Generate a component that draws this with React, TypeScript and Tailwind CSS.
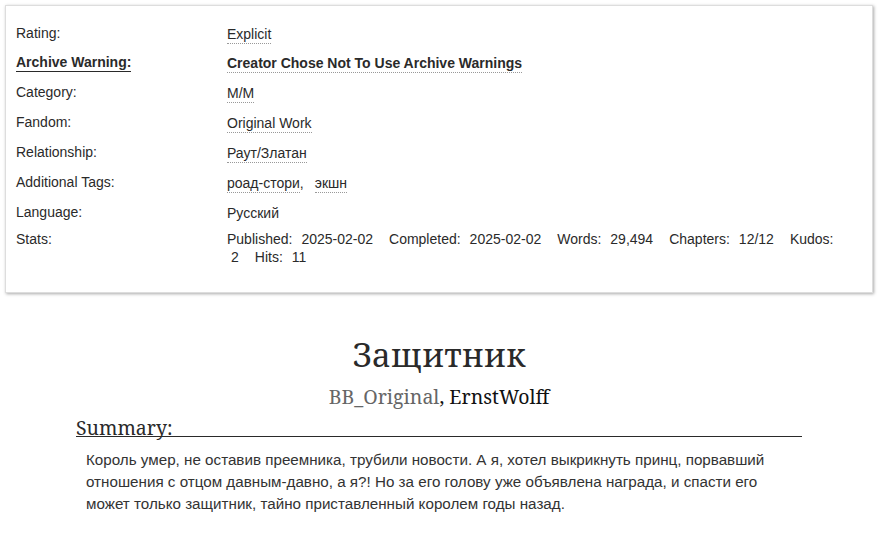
import React from 'react'

const sans = { fontFamily: '"Liberation Sans", Arial, sans-serif' }
const serif = { fontFamily: '"Noto Serif", "DejaVu Serif", Georgia, serif' }

function Tag({ children, bold = false }: { children: React.ReactNode; bold?: boolean }) {
  return (
    <span
      className={`inline-block border-b border-dotted border-[#999] leading-[18px] ${bold ? 'font-bold' : ''}`}
    >
      {children}
    </span>
  )
}

const stats1 = [
  ['Published:', '2025-02-02'],
  ['Completed:', '2025-02-02'],
  ['Words:', '29,494'],
  ['Chapters:', '12/12'],
]

export default function App() {
  return (
    <div className="min-h-[536px] bg-white text-[#2a2a2a]" style={sans}>
      <div className="mx-[5px] pt-[5px]">
        <div className="border border-[#ddd] bg-white shadow-[1px_1px_3px_#aaa] pl-[10px] pr-[10px] pt-[18px] pb-[26px] text-[14px] leading-[18px]">
          <div className="grid grid-cols-[211px_1fr] grid-rows-[29px_30px_30px_30px_30px_30px_27px_auto]">
            <div>Rating:</div>
            <div className="pt-px">
              <Tag>Explicit</Tag>
            </div>

            <div>
              <span className="inline-block border-b border-[#2a2a2a] font-bold">Archive Warning:</span>
            </div>
            <div className="pt-px">
              <Tag bold>Creator Chose Not To Use Archive Warnings</Tag>
            </div>

            <div>Category:</div>
            <div className="pt-px">
              <Tag>M/M</Tag>
            </div>

            <div>Fandom:</div>
            <div className="pt-px">
              <Tag>Original Work</Tag>
            </div>

            <div>Relationship:</div>
            <div className="pt-px">
              <Tag>Раут/Златан</Tag>
            </div>

            <div>Additional Tags:</div>
            <div className="pt-px">
              <Tag>роад-стори</Tag>,
              <span className="ml-[11px]">
                <Tag>экшн</Tag>
              </span>
            </div>

            <div>Language:</div>
            <div className="pt-px">Русский</div>

            <div>Stats:</div>
            <div>
              <div className="flex gap-x-[16px]">
                {stats1.map(([k, v]) => (
                  <span key={k} className="flex gap-x-[9px]">
                    <span>{k}</span>
                    <span>{v}</span>
                  </span>
                ))}
                <span>Kudos:</span>
              </div>
              <div className="flex gap-x-[16px] pl-[4px]">
                <span>2</span>
                <span className="flex gap-x-[9px]">
                  <span>Hits:</span>
                  <span>11</span>
                </span>
              </div>
            </div>
          </div>
        </div>
      </div>

      <div className="mx-[76px] mt-[42px]">
        <h2 className="text-center text-[33px] leading-[40px] text-[#2a2a2a]" style={serif}>
          Защитник
        </h2>
        <div className="mt-[9px] text-center text-[19.5px] leading-[26px]" style={serif}>
          <span className="text-[#666]">BB_Original</span>
          <span className="text-[#111]">, ErnstWolff</span>
        </div>
        <h3
          className="mt-[9px] border-b border-[#2a2a2a] text-[19.5px] leading-[17px] text-[#2a2a2a]"
          style={serif}
        >
          Summary:
        </h3>
        <p className="mx-[10px] mt-[12px] text-[15.2px] leading-[22px] text-[#333]">
          Король умер, не оставив преемника, трубили новости. А я, хотел выкрикнуть принц, порвавший
          отношения с отцом давным-давно, а я?! Но за его голову уже объявлена награда, и спасти его
          может только защитник, тайно приставленный королем годы назад.
        </p>
      </div>
    </div>
  )
}
